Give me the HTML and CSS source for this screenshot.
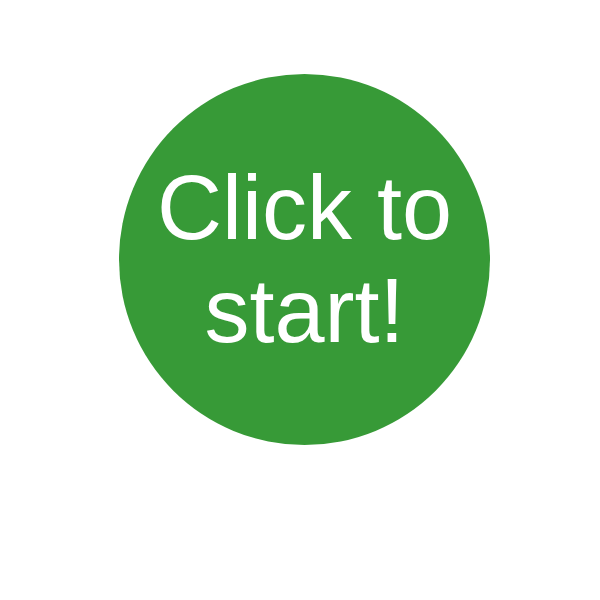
FILE: index.html
```html
<!DOCTYPE html>
<html>
<head>
<meta charset="utf-8">
<link rel="stylesheet" href="styles.css">
</head>
<body>
<div class="stage">
  <div class="start-button">Click to<br>start!</div>
</div>
</body>
</html>
```
FILE: styles.css
```css
html, body {
  margin: 0;
  padding: 0;
  background: #ffffff;
}
.stage {
  width: 600px;
  height: 600px;
  padding: 74px 0 0 119px;
  box-sizing: border-box;
}
.start-button {
  width: 371px;
  height: 371px;
  border-radius: 50%;
  background: #379a37;
  color: #ffffff;
  font-family: "Liberation Sans", Arial, sans-serif;
  font-size: 90px;
  text-align: center;
  display: flex;
  align-items: center;
  justify-content: center;
  cursor: pointer;
}
```
